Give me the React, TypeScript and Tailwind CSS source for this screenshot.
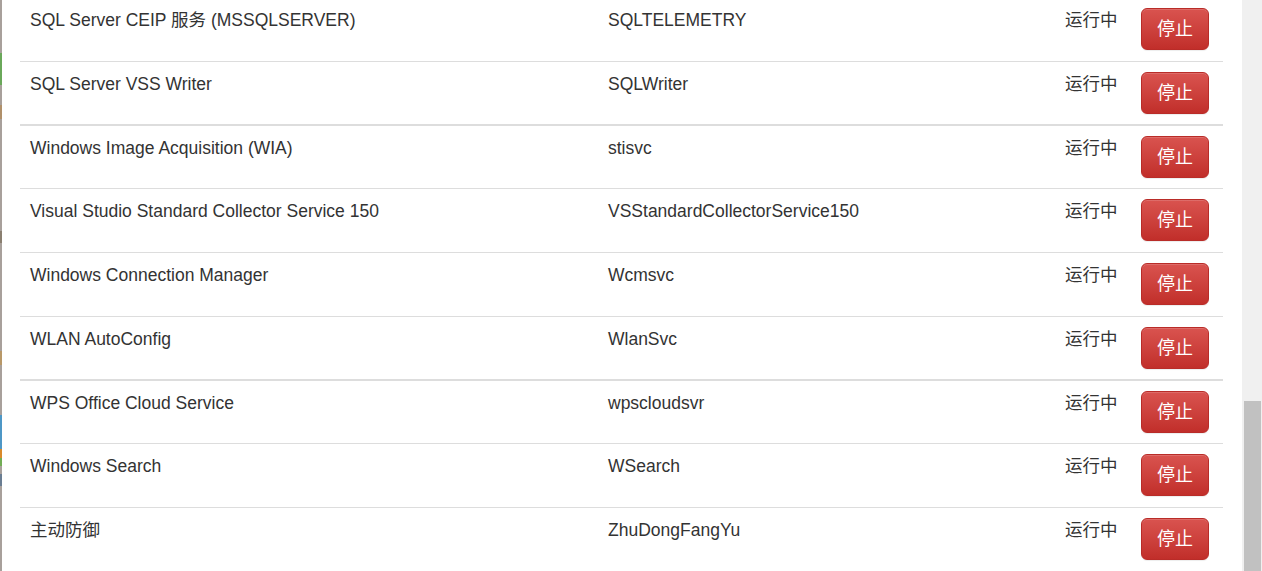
import React from "react";

type Row = { name: string; svc: string; h: string; border: string };

const rows: Row[] = [
  { name: "SQL Server CEIP 服务 (MSSQLSERVER)", svc: "SQLTELEMETRY", h: "h-[63px]", border: "" },
  { name: "SQL Server VSS Writer", svc: "SQLWriter", h: "h-[62px]", border: "border-t border-[#dddddd]" },
  { name: "Windows Image Acquisition (WIA)", svc: "stisvc", h: "h-[62px]", border: "border-t-2 border-[#dddddd]" },
  { name: "Visual Studio Standard Collector Service 150", svc: "VSStandardCollectorService150", h: "h-[63px]", border: "border-t border-[#dddddd]" },
  { name: "Windows Connection Manager", svc: "Wcmsvc", h: "h-[63px]", border: "border-t border-[#dddddd]" },
  { name: "WLAN AutoConfig", svc: "WlanSvc", h: "h-[62px]", border: "border-t border-[#dddddd]" },
  { name: "WPS Office Cloud Service", svc: "wpscloudsvr", h: "h-[62px]", border: "border-t-2 border-[#dddddd]" },
  { name: "Windows Search", svc: "WSearch", h: "h-[63px]", border: "border-t border-[#dddddd]" },
  { name: "主动防御", svc: "ZhuDongFangYu", h: "h-[63px]", border: "border-t border-[#dddddd]" },
];

export default function App() {
  return (
    <div
      className="flex h-[571px] w-[1262px] overflow-hidden bg-white text-[#333333]"
      style={{ fontFamily: '"Liberation Sans", Arial, "Noto Sans CJK SC", sans-serif' }}
    >
      {/* background window edge */}
      <div className="flex w-[2px] shrink-0 flex-col bg-[#a8a09b]">
        <div className="h-[53px]" />
        <div className="h-[32px] bg-[#6aa85a]" />
        <div className="h-[20px]" />
        <div className="h-[14px] bg-[#b0906a]" />
        <div className="h-[112px]" />
        <div className="h-[12px] bg-[#8a7f70]" />
        <div className="h-[108px]" />
        <div className="h-[14px] bg-[#b89868]" />
        <div className="h-[50px]" />
        <div className="h-[34px] bg-[#4e97c6]" />
        <div className="h-[9px] bg-[#d98a2b]" />
        <div className="h-[8px] bg-[#72ad55]" />
        <div className="h-[8px]" />
        <div className="h-[12px] bg-[#6a7d92]" />
      </div>

      {/* page content */}
      <div className="flex-1 pl-[18px] pr-[19px]">
        <div className="-mt-[2px] flex flex-col text-[17.5px] leading-[22.86px]">
          {rows.map((r, i) => (
            <div
              key={i}
              className={`grid grid-cols-[578px_457px_76px_92px] ${r.border}`}
            >
              <div className={`${r.h} px-[10px] pt-[11px] whitespace-nowrap`}>{r.name}</div>
              <div className={`${r.h} px-[10px] pt-[11px] whitespace-nowrap`}>{r.svc}</div>
              <div className={`${r.h} px-[10px] pt-[11px] whitespace-nowrap`}>运行中</div>
              <div className={`${r.h} pl-[10px] pt-[10px]`}>
                <button className="flex h-[42px] w-[68px] items-center justify-center rounded-[6px] border border-[#b92c28] bg-gradient-to-b from-[#d9534f] to-[#c12e2a] text-[18px] text-white shadow-[inset_0_1px_0_rgba(255,255,255,0.15),0_1px_1px_rgba(0,0,0,0.075)]">
                  停止
                </button>
              </div>
            </div>
          ))}
        </div>
      </div>

      {/* scrollbar */}
      <div className="flex w-[20px] shrink-0 flex-col bg-[#f0f0f0] pl-[2px] pr-[1px]">
        <div className="h-[401px]" />
        <div className="flex-1 bg-[#c1c1c1]" />
      </div>
    </div>
  );
}
